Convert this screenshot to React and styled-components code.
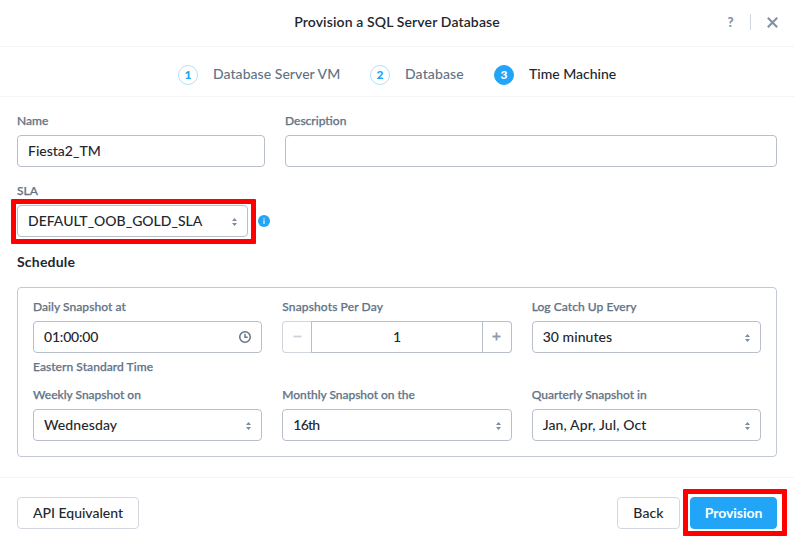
import React from 'react';
import styled, { createGlobalStyle, css } from 'styled-components';

const GlobalStyle = createGlobalStyle`
  *, *::before, *::after { box-sizing: border-box; }
  body {
    margin: 0;
    background: #fff;
    font-family: Lato, "Open Sans", sans-serif;
    font-size: 14px;
    font-weight: 500;
    color: #22272e;
  }
`;

const Dialog = styled.div`
  width: 794px;
  height: 546px;
  display: flex;
  flex-direction: column;
  background: #fff;
  overflow: hidden;
`;

const Text = styled.span`
  letter-spacing: ${(p) => p.$track || 0}px;
  white-space: nowrap;
`;

const Header = styled.header`
  height: 47px;
  flex: none;
  display: grid;
  grid-template-columns: 1fr auto 1fr;
  align-items: center;
  padding: 0 16px 2px;
  border-bottom: 1px solid #f2f4f6;
`;

const Title = styled.h1`
  grid-column: 2;
  margin: 0;
  font-size: 14px;
  line-height: 20px;
  font-weight: 600;
  letter-spacing: 0.13px;
`;

const HeaderActions = styled.div`
  display: flex;
  justify-content: flex-end;
  align-items: center;
  color: #8191a6;
`;

const Help = styled.span`
  width: 9px;
  text-align: center;
  font-size: 13px;
  font-weight: 900;
`;

const Divider = styled.span`
  width: 1px;
  height: 16px;
  margin: 0 16px 0 15px;
  background: #d1d7e0;
`;

const Steps = styled.nav`
  height: 50px;
  flex: none;
  display: flex;
  justify-content: center;
  align-items: center;
  gap: 29px;
  padding-top: 6px;
  border-bottom: 1px solid #f2f4f6;
`;

const Step = styled.div`
  display: flex;
  align-items: center;
  gap: 15px;
  line-height: 20px;
  color: ${(p) => (p.$active ? '#22272e' : '#627386')};
`;

const StepNumber = styled.span`
  width: 20px;
  height: 20px;
  border-radius: 50%;
  display: flex;
  align-items: center;
  justify-content: center;
  border: 1px solid ${(p) => (p.$active ? '#22a5f7' : '#b3dffc')};
  background: ${(p) => (p.$active ? '#22a5f7' : '#fff')};
  color: ${(p) => (p.$active ? '#fff' : '#22a5f7')};
  font-size: 12px;
  line-height: 18px;
  font-weight: 900;
`;

const StepLabel = styled(Text)`
  width: ${(p) => p.$width}px;
  margin-top: -2px;
`;

const Form = styled.main`
  height: 381px;
  display: flex;
  flex-direction: column;
  padding: 14px 17px 0;
`;

const TopRow = styled.div`
  display: grid;
  grid-template-columns: 248px 1fr;
  gap: 20px;
`;

const Field = styled.div`
  display: flex;
  flex-direction: column;
  min-width: 0;
`;

const caption = css`
  font-size: 12px;
  line-height: 20px;
  color: #627386;
  -webkit-text-stroke: 0.25px #627386;
`;

const Label = styled(Text).attrs({ as: 'label' })`
  ${caption}
  height: 24px;
`;

const HelpText = styled(Text)`
  ${caption}
  margin-top: 4px;
`;

const Control = styled.div`
  height: 32px;
  display: flex;
  align-items: center;
  justify-content: space-between;
  padding: 0 10px;
  border: 1px solid #b8bfca;
  border-radius: 4px;
  line-height: 20px;
`;

const SlaField = styled(Field)`
  margin-top: 14px;
`;

const SlaRow = styled.div`
  display: flex;
  align-items: center;
  gap: 10px;
`;

const Highlighted = styled.div`
  position: relative;
  width: ${(p) => p.$width};
`;

const HighlightBox = styled.span`
  position: absolute;
  inset: ${(p) => p.$inset};
  border: 5px solid #ff0000;
  border-radius: 1px;
  pointer-events: none;
`;

const SectionTitle = styled.h2`
  margin: 15px 0;
  font-size: 14px;
  line-height: 20px;
  font-weight: 700;
  letter-spacing: 0.2px;
`;

const SchedulePanel = styled.section`
  height: 170px;
  display: grid;
  grid-template-columns: repeat(3, 1fr);
  grid-template-rows: 88px 56px;
  column-gap: 20px;
  padding: 9px 15px;
  border: 1px solid #c3c9d2;
  border-radius: 4px;
`;

const Stepper = styled.div`
  height: 32px;
  display: grid;
  grid-template-columns: 29px 1fr 29px;
`;

const StepperButton = styled.span`
  display: flex;
  align-items: center;
  justify-content: center;
  padding-bottom: 2px;
  border: 1px solid ${(p) => (p.$disabled ? '#d1d6de' : '#b8bfca')};
  border-radius: ${(p) => (p.$end ? '0 4px 4px 0' : '4px 0 0 4px')};
  ${(p) => (p.$end ? 'border-left: 0;' : 'border-right: 0;')}
  color: ${(p) => (p.$disabled ? '#ccd2db' : '#8f9bae')};
`;

const StepperValue = styled.span`
  display: flex;
  align-items: center;
  justify-content: center;
  line-height: 20px;
  padding-bottom: 1px;
  border: 1px solid #b8bfca;
`;

const Footer = styled.footer`
  height: 69px;
  flex: none;
  display: flex;
  align-items: flex-start;
  gap: 10px;
  margin-top: -1px;
  padding: 19px 17px 0;
  border-top: 1px solid #f2f4f6;
`;

const Spacer = styled.div`
  flex: 1;
`;

const Button = styled.button`
  width: ${(p) => p.$width}px;
  height: 32px;
  display: flex;
  align-items: center;
  justify-content: center;
  padding: 0;
  border: 1px solid ${(p) => (p.$primary ? '#22a5f7' : '#d3d8e0')};
  border-radius: 4px;
  background: ${(p) => (p.$primary ? '#22a5f7' : '#fff')};
  color: ${(p) => (p.$primary ? '#fff' : '#22272e')};
  font: inherit;
  font-weight: ${(p) => (p.$primary ? 700 : 500)};
  line-height: 20px;
`;

const Icon = styled.svg`
  display: block;
  flex: none;
`;

const CloseIcon = () => (
  <Icon width="11" height="11" viewBox="0 0 11 11">
    <path d="M.8 .8l9.4 9.4M10.2 .8l-9.4 9.4" stroke="#8191a6" strokeWidth="2.1" />
  </Icon>
);

const SortIcon = () => (
  <Icon width="5" height="8" viewBox="0 0 5 8">
    <path d="M2.5 0L5 3H0zM2.5 8L0 5h5z" fill="#7d8ca0" />
  </Icon>
);

const ClockIcon = () => (
  <Icon width="12" height="12" viewBox="0 0 12 12">
    <circle cx="6" cy="6" r="5.25" fill="none" stroke="#627386" strokeWidth="1.5" />
    <path d="M6 2.8v3.5h2.6" fill="none" stroke="#627386" strokeWidth="1.4" />
  </Icon>
);

const InfoIcon = () => (
  <Icon width="12" height="12" viewBox="0 0 12 12">
    <circle cx="6" cy="6" r="6" fill="#22a5f7" />
    <path d="M6 5v4M6 3v1.2" stroke="#fff" strokeWidth="1.1" />
  </Icon>
);

const MinusIcon = () => (
  <Icon width="9" height="9" viewBox="0 0 9 9">
    <path d="M.5 4.5h8" stroke="currentColor" strokeWidth="1.8" />
  </Icon>
);

const PlusIcon = () => (
  <Icon width="9" height="9" viewBox="0 0 9 9">
    <path d="M.5 4.5h8M4.5 .5v8" stroke="currentColor" strokeWidth="1.8" />
  </Icon>
);

const SelectBox = styled(Control)`
  padding-right: 10px;

  ${Icon} {
    margin-top: 2px;
  }
`;

const Select = ({ value, track }) => (
  <SelectBox>
    <Text $track={track}>{value}</Text>
    <SortIcon />
  </SelectBox>
);

export default function App() {
  return (
    <>
      <GlobalStyle />
      <Dialog>
        <Header>
          <Title>Provision a SQL Server Database</Title>
          <HeaderActions>
            <Help>?</Help>
            <Divider />
            <CloseIcon />
          </HeaderActions>
        </Header>

        <Steps>
          <Step>
            <StepNumber>1</StepNumber>
            <StepLabel $width={128} $track={0.05}>Database Server VM</StepLabel>
          </Step>
          <Step>
            <StepNumber>2</StepNumber>
            <StepLabel $width={60} $track={0.13}>Database</StepLabel>
          </Step>
          <Step $active>
            <StepNumber $active>3</StepNumber>
            <StepLabel $width={87}>Time Machine</StepLabel>
          </Step>
        </Steps>

        <Form>
          <TopRow>
            <Field>
              <Label>Name</Label>
              <Control>
                <Text>Fiesta2_TM</Text>
              </Control>
            </Field>
            <Field>
              <Label>Description</Label>
              <Control />
            </Field>
          </TopRow>

          <SlaField>
            <Label>SLA</Label>
            <SlaRow>
              <Highlighted $width="231px">
                <Select value="DEFAULT_OOB_GOLD_SLA" />
                <HighlightBox $inset="-6px -8px -7px -6px" />
              </Highlighted>
              <InfoIcon />
            </SlaRow>
          </SlaField>

          <SectionTitle>Schedule</SectionTitle>

          <SchedulePanel>
            <Field>
              <Label $track={0.06}>Daily Snapshot at</Label>
              <Control>
                <Text $track={-0.2}>01:00:00</Text>
                <ClockIcon />
              </Control>
              <HelpText $track={0.06}>Eastern Standard Time</HelpText>
            </Field>
            <Field>
              <Label $track={0.12}>Snapshots Per Day</Label>
              <Stepper>
                <StepperButton $disabled>
                  <MinusIcon />
                </StepperButton>
                <StepperValue>1</StepperValue>
                <StepperButton $end>
                  <PlusIcon />
                </StepperButton>
              </Stepper>
            </Field>
            <Field>
              <Label $track={0.06}>Log Catch Up Every</Label>
              <Select value="30 minutes" track={0.05} />
            </Field>
            <Field>
              <Label>Weekly Snapshot on</Label>
              <Select value="Wednesday" track={0.1} />
            </Field>
            <Field>
              <Label $track={-0.03}>Monthly Snapshot on the</Label>
              <Select value="16th" track={-0.8} />
            </Field>
            <Field>
              <Label>Quarterly Snapshot in</Label>
              <Select value="Jan, Apr, Jul, Oct" track={0.12} />
            </Field>
          </SchedulePanel>
        </Form>

        <Footer>
          <Button $width={122}>
            <Text>API Equivalent</Text>
          </Button>
          <Spacer />
          <Button $width={63}>
            <Text $track={0.1}>Back</Text>
          </Button>
          <Highlighted $width="87px">
            <Button $primary $width={87}>
              <Text $track={-0.05}>Provision</Text>
            </Button>
            <HighlightBox $inset="-8px -10px -7px -7px" />
          </Highlighted>
        </Footer>
      </Dialog>
    </>
  );
}
